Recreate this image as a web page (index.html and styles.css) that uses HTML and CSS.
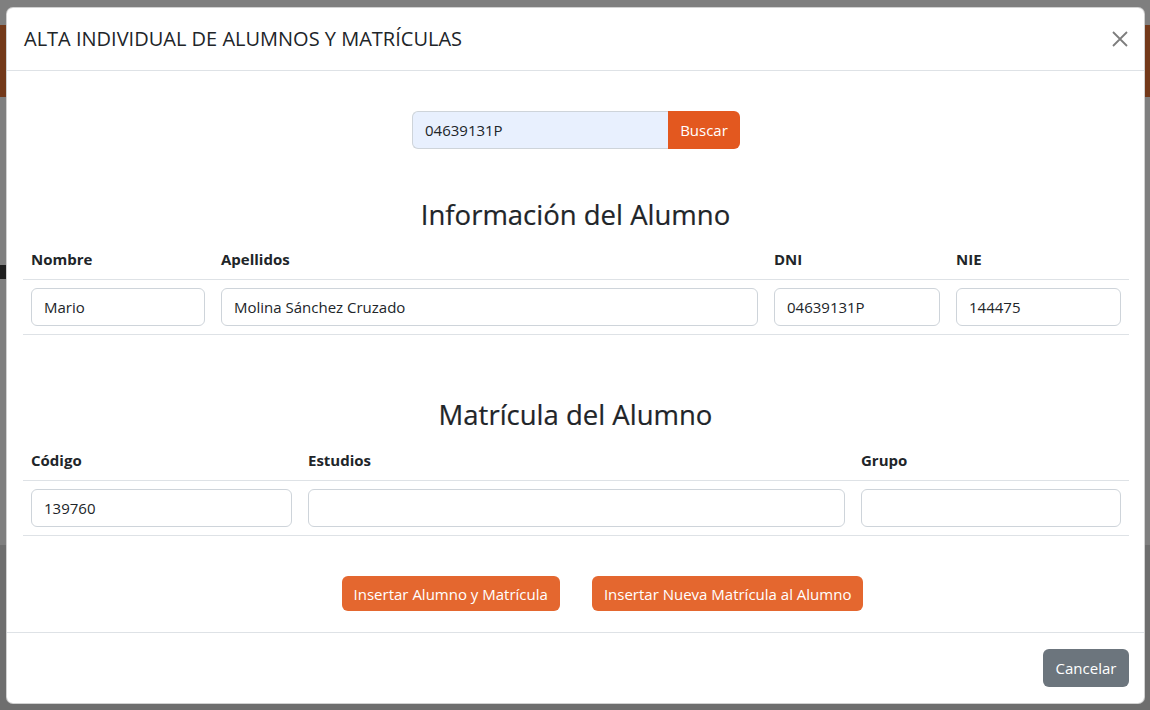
FILE: index.html
```html
<!DOCTYPE html>
<html lang="es">
<head>
<meta charset="utf-8">
<title>Alta individual</title>
<link rel="stylesheet" href="styles.css">
</head>
<body>
<div class="page">
  <div class="page-band"></div>
  <div class="page-mid"><span class="page-mark"></span></div>
  <div class="page-low"></div>
</div>

<div class="modal">
  <div class="modal-header">
    <h5 class="modal-title">ALTA INDIVIDUAL DE ALUMNOS Y MATRÍCULAS</h5>
    <button class="btn-close" type="button" aria-label="Cerrar">
      <svg width="16" height="16" viewBox="0 0 16 16"><path d="M1 1L15 15M15 1L1 15" stroke="#7d7d7d" stroke-width="1.8" fill="none"/></svg>
    </button>
  </div>
  <div class="modal-body">
    <div class="search">
      <input class="search-input" type="text" value="04639131P">
      <button class="btn-buscar" type="button">Buscar</button>
    </div>

    <h2 class="section-title first">Información del Alumno</h2>
    <table class="data-table">
      <colgroup><col class="c-nombre"><col class="c-apellidos"><col class="c-dni"><col class="c-nie"></colgroup>
      <thead>
        <tr><th>Nombre</th><th>Apellidos</th><th>DNI</th><th>NIE</th></tr>
      </thead>
      <tbody>
        <tr>
          <td><input class="field" type="text" value="Mario"></td>
          <td><input class="field" type="text" value="Molina Sánchez Cruzado"></td>
          <td><input class="field" type="text" value="04639131P"></td>
          <td><input class="field" type="text" value="144475"></td>
        </tr>
      </tbody>
    </table>

    <h2 class="section-title second">Matrícula del Alumno</h2>
    <table class="data-table">
      <colgroup><col class="c-codigo"><col class="c-estudios"><col class="c-grupo"></colgroup>
      <thead>
        <tr><th>Código</th><th>Estudios</th><th>Grupo</th></tr>
      </thead>
      <tbody>
        <tr>
          <td><input class="field" type="text" value="139760"></td>
          <td><input class="field" type="text" value=""></td>
          <td><input class="field" type="text" value=""></td>
        </tr>
      </tbody>
    </table>

    <div class="actions">
      <button class="btn-orange" type="button">Insertar Alumno y Matrícula</button>
      <button class="btn-orange" type="button">Insertar Nueva Matrícula al Alumno</button>
    </div>
  </div>
  <div class="modal-footer">
    <button class="btn-secondary" type="button">Cancelar</button>
  </div>
</div>
</body>
</html>
```

FILE: styles.css
```css
* { box-sizing: border-box; }

html, body {
  margin: 0;
  padding: 0;
  width: 1150px;
  height: 710px;
  overflow: hidden;
}

body {
  background: #7f7f7f;
  font-family: "Open Sans", "Noto Sans", "Liberation Sans", sans-serif;
  color: #212529;
}

.page {
  display: flex;
  flex-direction: column;
  height: 710px;
}

.page-band {
  margin-top: 25px;
  height: 72px;
  background: #73391a;
}

.page-mid {
  height: 448px;
  padding-top: 168px;
}

.page-mark {
  display: block;
  width: 6px;
  height: 14px;
  background: #1e1e1e;
}

.page-low {
  flex: 1;
  background: #6e6e6e;
}

.modal {
  position: absolute;
  left: 6px;
  top: 7px;
  width: 1139px;
  background: #fff;
  border: 1px solid rgba(0,0,0,0.18);
  border-radius: 7px;
  display: flex;
  flex-direction: column;
}

.modal-header {
  display: flex;
  align-items: center;
  justify-content: space-between;
  padding: 16px 16px 16px 17px;
  border-bottom: 1px solid #dee2e6;
}

.modal-title {
  margin: 0;
  font-size: 20px;
  font-weight: 500;
  line-height: 30px;
  color: #212529;
}

.btn-close {
  border: 0;
  background: transparent;
  padding: 0;
  width: 16px;
  height: 16px;
  display: flex;
}

.modal-body {
  padding: 40px 16px 21px;
}

.search {
  display: flex;
  justify-content: center;
  padding-left: 1px;
}

.search-input {
  width: 256px;
  height: 38px;
  border: 1px solid #ced4da;
  border-right: 0;
  border-radius: 6px 0 0 6px;
  background: #e8f0fe;
  font-family: inherit;
  font-size: 15px;
  color: #212529;
  padding: 6px 12px;
}

.btn-buscar {
  width: 72px;
  height: 38px;
  border: 0;
  border-radius: 0 6px 6px 0;
  background: #e3581f;
  color: #fff;
  font-family: inherit;
  font-size: 15px;
}

.section-title {
  margin: 0 0 6px;
  text-align: center;
  font-size: 27.5px;
  font-weight: 500;
  line-height: 38px;
  color: #212529;
  -webkit-text-stroke: 0.2px #212529;
}

.section-title.first { margin-top: 47px; }
.section-title.second { margin-top: 61px; }

.data-table {
  width: 100%;
  border-collapse: collapse;
  table-layout: fixed;
}

.first + .data-table { margin-top: -1px; }

.c-nombre { width: 190px; }
.c-apellidos { width: 553px; }
.c-dni { width: 182px; }
.c-nie { width: 181px; }
.c-codigo { width: 277px; }
.c-estudios { width: 553px; }
.c-grupo { width: 276px; }

.data-table th {
  text-align: left;
  font-size: 15px;
  font-weight: 700;
  line-height: 24px;
  padding: 8px;
  border-bottom: 1px solid #dee2e6;
}

.data-table td {
  padding: 8px;
  border-bottom: 1px solid #dee2e6;
}

.field {
  display: block;
  width: 100%;
  height: 38px;
  border: 1px solid #ced4da;
  border-radius: 6px;
  background: #fff;
  padding: 6px 12px;
  font-family: inherit;
  font-size: 15px;
  color: #212529;
}

.actions {
  display: flex;
  justify-content: center;
  gap: 32px;
  margin-top: 40px;
  padding-left: 54px;
}

.btn-orange {
  height: 35px;
  border: 0;
  border-radius: 6px;
  background: #e4672f;
  color: #fff;
  font-family: inherit;
  font-size: 15px;
  padding: 0 12px;
}

.modal-footer {
  display: flex;
  justify-content: flex-end;
  padding: 16px 15px 16px 16px;
  border-top: 1px solid #dee2e6;
}

.btn-secondary {
  height: 38px;
  width: 86px;
  border: 0;
  border-radius: 6px;
  background: #6c757d;
  color: #fff;
  font-family: inherit;
  font-size: 15px;
}
```
